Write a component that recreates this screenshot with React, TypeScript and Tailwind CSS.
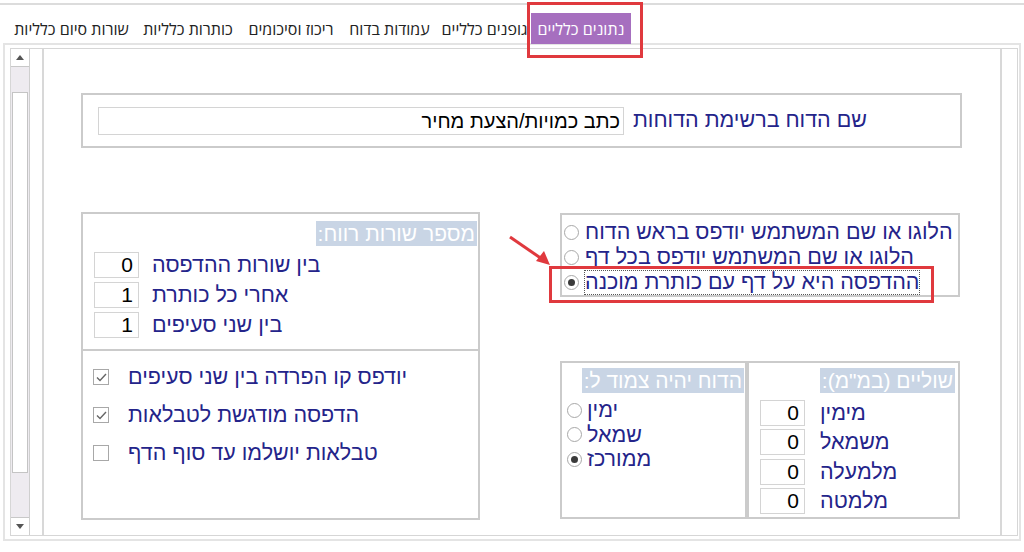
import React from "react";

const navy = "text-[#24248a]";

function Heading({ text }: { text: string }) {
  return (
    <div className="flex justify-end">
      <span className="bg-[#c9d5e5] px-[2px] text-[21px] leading-[25px] text-white" dir="rtl">
        {text}
      </span>
    </div>
  );
}

function NumBox({ value }: { value: string }) {
  return (
    <div
      className="flex h-[26px] w-[45px] shrink-0 items-center justify-end border border-[#d4d4d4] bg-white pr-[5px] text-[21px] leading-[26px] text-black"
      dir="ltr"
    >
      {value}
    </div>
  );
}

function Radio({ checked }: { checked?: boolean }) {
  return (
    <span className="flex h-[15px] w-[15px] shrink-0 items-center justify-center rounded-full border border-[#a8a8a8] bg-white">
      {checked && <span className="h-[7px] w-[7px] rounded-full bg-[#3a3a3a]" />}
    </span>
  );
}

function Check({ checked }: { checked?: boolean }) {
  return (
    <span className="flex h-[16px] w-[16px] shrink-0 items-center justify-center border border-[#a8a8a8] bg-white">
      {checked && (
        <svg width="11" height="9" viewBox="0 0 11 9">
          <path d="M1 4.5 L4 7.5 L10 1" fill="none" stroke="#666" strokeWidth="1.4" />
        </svg>
      )}
    </span>
  );
}

const tabs = [
  { label: "שורות סיום כלליות", w: "w-[127px]" },
  { label: "כותרות כלליות", w: "w-[106px]" },
  { label: "ריכוז וסיכומים", w: "w-[100px]" },
  { label: "עמודות בדוח", w: "w-[97px]" },
  { label: "גופנים כלליים", w: "w-[93px]" },
];

export default function App() {
  return (
    <div
      className="relative h-[552px] w-[1024px] overflow-hidden bg-white"
      style={{ fontFamily: '"Liberation Sans", Arial, sans-serif' }}
    >
      {/* top line */}
      <div className="mt-[3px] h-[2px] w-full bg-[#dcdcdc]" />

      {/* tab strip */}
      <div
        className="mt-[8px] flex h-[31px] items-stretch pl-[8px] text-[16px] text-[#222]"
        style={{ fontFamily: '"Open Sans", "Liberation Sans", sans-serif' }}
        dir="ltr"
      >
        {tabs.map((t) => (
          <div key={t.label} className={`${t.w} flex items-center justify-center whitespace-nowrap`} dir="rtl">
            {t.label}
          </div>
        ))}
        <div className="flex w-[100px] items-center justify-center whitespace-nowrap bg-[#a66fbf] text-white" dir="rtl">
          נתונים כלליים
        </div>
      </div>

      {/* outer frame */}
      <div className="mx-[3px] mt-[-1px] h-[498px] border-2 border-[#e4e4e4] pb-[3px] pl-[5px] pr-[1px] pt-[3px]">
        <div className="flex h-full border border-[#d6d6d6]">
          {/* scrollbar */}
          <div className="flex w-[19px] flex-col border-r border-[#cfcfcf] bg-[#eeebf0]">
            <div className="flex h-[18px] items-center justify-center border-b border-[#c8c8c8] bg-white">
              <svg width="8" height="5" viewBox="0 0 8 5">
                <path d="M0 5 L4 0 L8 5 Z" fill="#555" />
              </svg>
            </div>
            <div className="h-[25px]" />
            <div className="mx-[1px] h-[381px] border border-[#c4c4c4] bg-white" />
            <div className="flex-1" />
            <div className="flex h-[18px] items-center justify-center border-t border-[#c8c8c8] bg-white">
              <svg width="8" height="5" viewBox="0 0 8 5">
                <path d="M0 0 L4 5 L8 0 Z" fill="#555" />
              </svg>
            </div>
          </div>

          <div className="w-[12px]" />

          {/* content panel */}
          <div className="w-[960px] border-x-2 border-[#d8d8d8] pl-[37px] pr-[38px] pt-[44px]">
            {/* report name */}
            <div className="flex h-[55px] items-center border-2 border-[#cbcbcb] pl-[15px] pr-[93px]">
              <div
                className="h-[28px] w-[526px] border border-[#d4d4d4] bg-white pr-[3px] text-right text-[20px] leading-[26px] text-black"
                dir="rtl"
              >
                כתב כמויות/הצעת מחיר
              </div>
              <div className={`flex-1 text-right text-[21.5px] ${navy}`} dir="rtl">
                שם הדוח ברשימת הדוחות
              </div>
            </div>

            <div className="mt-[64px] flex gap-[80px]">
              {/* left box */}
              <div className="flex h-[308px] w-[399px] flex-col border-2 border-[#cbcbcb]">
                <div className="h-[137px] border-b-2 border-[#cbcbcb] pr-[1px] pt-[7px]">
                  <Heading text="מספר שורות רווח:" />
                  <div className="mt-[6px] flex flex-col gap-[4px] pl-[11px]">
                    {[
                      ["0", "בין שורות ההדפסה"],
                      ["1", "אחרי כל כותרת"],
                      ["1", "בין שני סעיפים"],
                    ].map(([v, l]) => (
                      <div key={l} className="flex h-[26px] items-center gap-[13px]">
                        <NumBox value={v} />
                        <span className={`text-[21.5px] leading-[26px] ${navy}`} dir="rtl">
                          {l}
                        </span>
                      </div>
                    ))}
                  </div>
                </div>
                <div className="flex flex-col gap-[22px] pl-[10px] pt-[18px]">
                  {[
                    [true, "יודפס קו הפרדה בין שני סעיפים"],
                    [true, "הדפסה מודגשת לטבלאות"],
                    [false, "טבלאות יושלמו עד סוף הדף"],
                  ].map(([c, l]) => (
                    <div key={l as string} className="flex h-[16px] items-center gap-[19px]">
                      <Check checked={c as boolean} />
                      <span className={`text-[21.5px] leading-[26px] ${navy}`} dir="rtl">
                        {l as string}
                      </span>
                    </div>
                  ))}
                </div>
              </div>

              {/* right column */}
              <div className="flex w-[400px] flex-col">
                <div className="mt-[1px] h-[84px] border-2 border-[#cbcbcb] pl-[2px] pt-[5px]">
                  {[
                    [false, "הלוגו או שם המשתמש יודפס בראש הדוח"],
                    [false, "הלוגו או שם המשתמש יודפס בכל דף"],
                    [true, "ההדפסה היא על דף עם כותרת מוכנה"],
                  ].map(([c, l]) => (
                    <div key={l as string} className="flex h-[25px] items-center gap-[6px]">
                      <Radio checked={c as boolean} />
                      <span
                        className={`whitespace-nowrap text-[21.5px] leading-[23px] ${navy} ${c ? "outline-1 outline-dotted outline-[#555]" : ""}`}
                        dir="rtl"
                      >
                        {l as string}
                      </span>
                    </div>
                  ))}
                </div>

                <div className="mt-[64px] flex h-[158px]">
                  {/* alignment */}
                  <div className="w-[187px] border-2 border-[#cbcbcb] pr-[1px] pt-[5px]">
                    <Heading text="הדוח יהיה צמוד ל:" />
                    <div className="mt-[5px] flex flex-col pl-[5px]">
                      {[
                        [false, "ימין"],
                        [false, "שמאל"],
                        [true, "ממורכז"],
                      ].map(([c, l]) => (
                        <div key={l as string} className="flex h-[24.5px] items-center gap-[5px]">
                          <Radio checked={c as boolean} />
                          <span className={`text-[21.5px] leading-[24px] ${navy}`} dir="rtl">
                            {l as string}
                          </span>
                        </div>
                      ))}
                    </div>
                  </div>
                  {/* margins */}
                  <div className="w-[213px] border-2 border-[#cbcbcb] pr-[3px] pt-[5px]">
                    <Heading text='שוליים (במ"מ):' />
                    <div className="mt-[7px] flex flex-col gap-[3.3px] pl-[11px]">
                      {["מימין", "משמאל", "מלמעלה", "מלמטה"].map((l) => (
                        <div key={l} className="flex h-[26px] items-center gap-[15px]">
                          <NumBox value="0" />
                          <span className={`text-[21.5px] leading-[26px] ${navy}`} dir="rtl">
                            {l}
                          </span>
                        </div>
                      ))}
                    </div>
                  </div>
                </div>
              </div>
            </div>
          </div>

          <div className="flex-1" />
        </div>
      </div>

      {/* annotations */}
      <div className="absolute left-[527px] top-[2px] h-[56px] w-[116px] border-[3px] border-[#e0393e]" />
      <div className="absolute left-[549px] top-[266px] h-[37px] w-[385px] border-[3px] border-[#e0393e]" />
      <svg className="absolute left-[500px] top-[228px]" width="60" height="45" viewBox="0 0 60 45">
        <line x1="10" y1="9" x2="42" y2="31" stroke="#e0393e" strokeWidth="3" />
        <path d="M50 37 L36 33 L44 23 Z" fill="#e0393e" />
      </svg>
    </div>
  );
}
